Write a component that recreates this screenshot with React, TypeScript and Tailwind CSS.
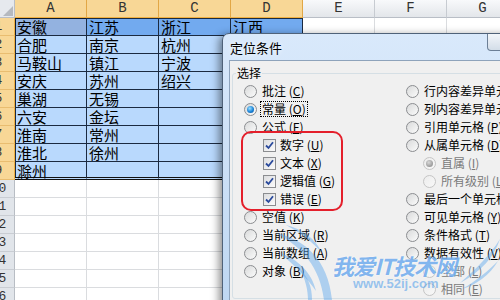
import React from "react";

const data = [
  ["安徽", "江苏", "浙江", "江西"],
  ["合肥", "南京", "杭州", ""],
  ["马鞍山", "镇江", "宁波", ""],
  ["安庆", "苏州", "绍兴", ""],
  ["巢湖", "无锡", "", ""],
  ["六安", "金坛", "", ""],
  ["淮南", "常州", "", ""],
  ["淮北", "徐州", "", ""],
  ["滁州", "", "", ""],
];

const cols = ["A", "B", "C", "D", "E", "F", "G"];
const blankRows = [10, 11, 12, 13, 14, 15, 16];

const RowHead = ({ n, sel }: { n: number; sel: boolean }) => (
  <div
    className={`w-[15px] h-[18px] shrink-0 overflow-hidden border-r border-b ${
      sel
        ? "bg-[#f8d796] border-r-[#f0b040] border-b-[#e9bd70]"
        : "bg-[#e1e5ea] border-r-[#b8bdc4] border-b-[#c9cdd3]"
    }`}
  >
    <div className="w-[27px] -ml-[15px] text-center leading-[17px] text-[13px] text-[#333] font-['Liberation_Mono',monospace]">
      {n}
    </div>
  </div>
);

const Sheet = () => (
  <div className="flex flex-col">
    {/* column headers */}
    <div className="flex h-[18px]">
      <div className="w-[15px] h-[18px] shrink-0 border-r border-b border-[#b9bec6] bg-[#e6e9ee] flex items-end justify-end">
        <svg width="12" height="12" viewBox="0 0 12 12">
          <path d="M1 11 L11 11 L11 1 Z" fill="#b5b9bf" />
        </svg>
      </div>
      {cols.map((c, i) => (
        <div
          key={c}
          className={`w-[72px] h-[18px] shrink-0 border-r border-b flex items-center justify-center text-[14px] text-[#333] font-['Liberation_Mono',monospace] ${
            i < 4
              ? "bg-[#f8d796] border-r-[#e2a745] border-b-[#f0b040]"
              : "bg-gradient-to-b from-[#f8f9fb] to-[#e3e6ea] border-r-[#c7cbd1] border-b-[#b9bec6]"
          }`}
        >
          {c}
        </div>
      ))}
    </div>

    {/* selected data rows */}
    {data.map((row, r) => (
      <div key={r} className="flex h-[18px]">
        <RowHead n={r + 1} sel />
        {row.map((txt, c) => {
          const bg =
            r === 0 ? (c === 0 ? "bg-[#93b2e0]" : "bg-[#72aaef]") : "bg-[#b9d9fd]";
          const edge =
            r === 0 && c === 0
              ? "shadow-[inset_1px_1px_0_#0e1a2c]"
              : r === 0
              ? "shadow-[inset_0_1px_0_#1b2a40]"
              : c === 0
              ? "shadow-[inset_1px_0_0_#1b2a40]"
              : "";
          return (
            <div
              key={c}
              className={`w-[72px] h-[18px] shrink-0 border-r border-[#1b2a40] ${bg} ${edge} ${
                r === 8 ? "border-b-[3px] border-b-[#111] border-double" : "border-b"
              } pl-[2px] text-[15px] leading-[17px] text-black whitespace-nowrap`}
            >
              {txt}
            </div>
          );
        })}
        {[0, 1, 2].map((k) => (
          <div
            key={k}
            className="w-[72px] h-[18px] shrink-0 border-r border-b border-[#dadcdf] bg-white"
          />
        ))}
      </div>
    ))}

    {blankRows.map((n) => (
      <div key={n} className="flex h-[18px]">
        <RowHead n={n} sel={false} />
        {cols.map((c) => (
          <div
            key={c}
            className="w-[72px] h-[18px] shrink-0 border-r border-b border-[#dadcdf] bg-white"
          />
        ))}
      </div>
    ))}
  </div>
);

const Radio = ({ on, off }: { on?: boolean; off?: boolean }) => (
  <span
    className={`w-[13px] h-[13px] shrink-0 rounded-full border flex items-center justify-center ${
      off
        ? "border-[#c5c5c5] bg-gradient-to-br from-[#ececec] to-[#f8f8f8]"
        : "border-[#8b8d90] bg-gradient-to-br from-[#d9dadb] to-[#fbfbfb]"
    }`}
  >
    {on && (
      <span
        className={`w-[7px] h-[7px] rounded-full ${
          off
            ? "bg-[radial-gradient(circle_at_40%_35%,#d8d8d8,#9a9a9a_70%)]"
            : "bg-[radial-gradient(circle_at_40%_35%,#9be0ff,#1b84d8_55%,#0b4d96)]"
        }`}
      />
    )}
  </span>
);

const Check = () => (
  <span className="w-[13px] h-[13px] shrink-0 border border-[#8b8d90] bg-gradient-to-br from-[#dcdddf] to-[#fbfbfb] flex items-center justify-center">
    <svg width="9" height="9" viewBox="0 0 9 9">
      <path d="M1 4.5 L3.5 7 L8 1.2" fill="none" stroke="#2a4a9c" strokeWidth="1.8" />
    </svg>
  </span>
);

const Label = ({ t, k, dim }: { t: string; k: string; dim?: boolean }) => (
  <span className={`whitespace-nowrap ${dim ? "text-[#7a7a7a]" : "text-black"}`}>
    {t} (<span className="underline underline-offset-1">{k}</span>)
  </span>
);

const Opt = ({
  t,
  k,
  on,
  off,
  indent,
}: {
  t: string;
  k: string;
  on?: boolean;
  off?: boolean;
  indent?: boolean;
}) => (
  <div className={`flex items-center h-[18px] gap-[5px] ${indent ? "pl-[17px]" : ""}`}>
    <Radio on={on} off={off} />
    <Label t={t} k={k} dim={off} />
  </div>
);

const Box = ({ t, k }: { t: string; k: string }) => (
  <div className="flex items-center h-[18px] gap-[4px] pl-[19px]">
    <Check />
    <Label t={t} k={k} />
  </div>
);

const Dialog = () => (
  <div className="absolute left-[222px] top-[33px] w-[320px] h-[290px] rounded-tl-[7px] border border-[#4f6279] bg-gradient-to-b from-[#d9e9fb] to-[#bdd6f1] shadow-[-3px_2px_8px_rgba(0,0,0,0.45)] flex flex-col">
    <div className="h-[26px] flex">
      <span className="self-center pl-[7px] text-[13px] leading-[15px] text-black [text-shadow:0_0_5px_#fff]">
        定位条件
      </span>
      <div className="ml-auto mr-[11px] w-[43px] h-[17px] rounded-b-[4px] border border-t-0 border-[#6c7f96] bg-gradient-to-b from-[#f3f6fa] to-[#d3dde8]" />
    </div>
    <div className="ml-[6px] flex-1 border border-[#8ea3bb] bg-[#f0f0f0] pl-[2px] pt-[5px] text-[12px]">
      <fieldset className="border border-[#d5dfe5] rounded-[3px] pt-[2px]">
        <legend className="ml-[3px] px-[1px] leading-[14px]">选择</legend>
        <div className="grid grid-cols-[162px_1fr] pl-[11px]">
          <div className="flex flex-col">
            <Opt t="批注" k="C" />
            <div className="flex items-center h-[18px] gap-[3px]">
              <Radio on />
              <span className="border border-dotted border-black px-[1px] leading-[14px] whitespace-nowrap">
                常量 (<span className="underline underline-offset-1">O</span>)
              </span>
            </div>
            <Opt t="公式" k="F" />
            <div className="relative">
              <Box t="数字" k="U" />
              <Box t="文本" k="X" />
              <Box t="逻辑值" k="G" />
              <Box t="错误" k="E" />
              {/* red annotation outline */}
              <div className="absolute -left-[3px] -top-[5px] -bottom-[3px] w-[102px] rounded-[10px] border-2 border-[#e41f2b]" />
            </div>
            <Opt t="空值" k="K" />
            <Opt t="当前区域" k="R" />
            <Opt t="当前数组" k="A" />
            <Opt t="对象" k="B" />
          </div>
          <div className="flex flex-col">
            <Opt t="行内容差异单元格" k="W" />
            <Opt t="列内容差异单元格" k="M" />
            <Opt t="引用单元格" k="P" />
            <Opt t="从属单元格" k="D" />
            <Opt t="直属" k="I" on off indent />
            <Opt t="所有级别" k="L" off indent />
            <Opt t="最后一个单元格" k="S" />
            <Opt t="可见单元格" k="Y" />
            <Opt t="条件格式" k="T" />
            <Opt t="数据有效性" k="V" />
            <Opt t="全部" k="L" off indent />
            <Opt t="相同" k="E" off indent />
          </div>
        </div>
      </fieldset>
    </div>
  </div>
);

const Watermark = () => (
  <div className="absolute left-[270px] top-[225px] w-[230px] h-[75px] pointer-events-none">
    <svg className="absolute inset-0" width="230" height="75" viewBox="0 0 230 75">
      <g fill="#5aa6ee" fillOpacity="0.45">
        <path d="M6 8 C34 14 58 34 62 75 L54 75 C50 42 32 22 6 8 Z" />
        <path d="M10 28 C28 34 42 48 46 66 C36 52 24 40 10 28 Z" />
        <path d="M16 0 C32 4 46 14 52 28 C42 16 30 8 16 0 Z" />
        <path d="M30 44 C38 52 42 62 42 75 L38 75 C38 64 35 54 30 44 Z" />
        <path d="M230 14 C224 32 212 46 190 58 C206 44 220 30 230 14 Z" />
        <path d="M228 36 C220 50 206 60 192 64 C206 56 218 46 228 36 Z" />
      </g>
    </svg>
    <div className="relative flex flex-col pl-[62px] pt-[28px]">
      <span className="text-[22px] leading-[24px] font-bold italic text-[#2f86e6]/60 tracking-[-1px] [text-shadow:0_0_2px_rgba(255,255,255,0.9)] whitespace-nowrap">
        我爱IT技术网
      </span>
      <span className="pl-[21px] text-[13px] leading-[14px] font-bold text-[#4a9bea]/55 font-['Liberation_Sans',sans-serif] whitespace-nowrap">
        www.52ij.com
      </span>
    </div>
  </div>
);

export default function App() {
  return (
    <div className="relative w-[500px] h-[300px] overflow-hidden bg-white font-['Noto_Sans_CJK_SC',sans-serif]">
      <Sheet />
      <Dialog />
      <Watermark />
    </div>
  );
}
